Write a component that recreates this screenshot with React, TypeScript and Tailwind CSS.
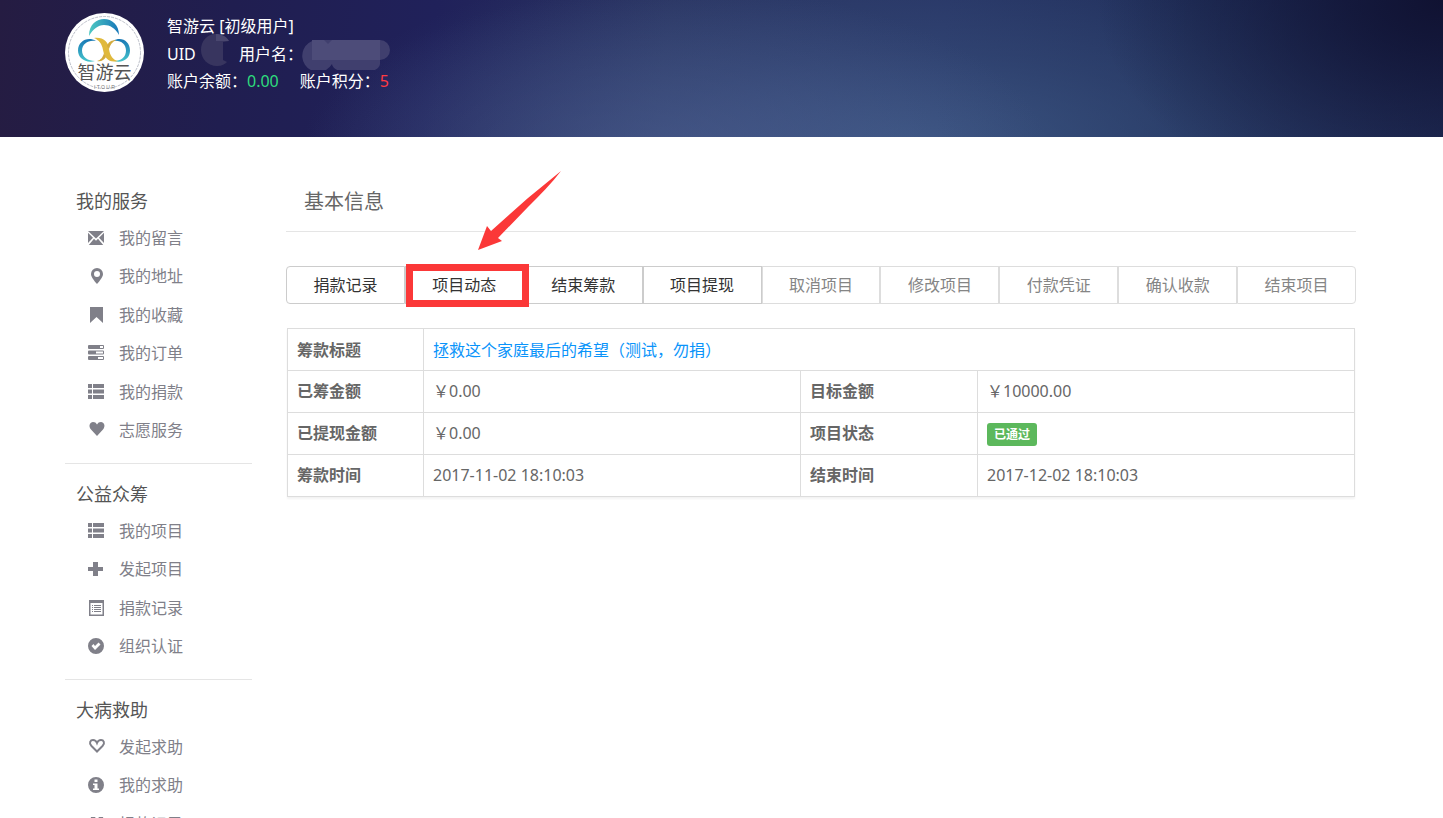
import React from 'react';

const iconPaths: Record<string, React.ReactNode> = {
  mail: (
    <>
      <path d="M0 1h16L8 8.600z" />
      <path d="M0 2.800v10.200L5 7.800zM16 2.800v10.200l-5-5.200zM0.800 15l5.200-6.200 2 1.900 2-1.900 5.200 6.200z" />
    </>
  ),
  pin: <path fillRule="evenodd" d="M9 0a6 6 0 0 1 6 6c0 3-3 6.500-6 10C6 12.500 3 9 3 6a6 6 0 0 1 6-6zm0 3a3 3 0 1 0 0 6 3 3 0 0 0 0-6z" />,
  bookmark: <path d="M2 0h13v16l-6.500-6L2 16z" />,
  tasks: (
    <path
      fillRule="evenodd"
      d="M1 0h14a1 1 0 0 1 1 1v2a1 1 0 0 1-1 1H1a1 1 0 0 1-1-1V1a1 1 0 0 1 1-1zm11 1v2h3V1zM1 5.500h14a1 1 0 0 1 1 1v2a1 1 0 0 1-1 1H1a1 1 0 0 1-1-1v-2a1 1 0 0 1 1-1zm7 1v2h7v-2zM1 11h14a1 1 0 0 1 1 1v2a1 1 0 0 1-1 1H1a1 1 0 0 1-1-1v-2a1 1 0 0 1 1-1zm9 1v2h5v-2z"
    />
  ),
  list: <path d="M0 0h4v4H0zM5 0h11v4H5zM0 5.500h4v4H0zM5 5.500h11v4H5zM0 11h4v4H0zM5 11h11v4H5z" />,
  heart: <path d="M9 14L3 7.500C0 4 2 0 5 0c2 0 3 .8 4 2.500C10 .8 11 0 13 0c3 0 5 4 2 7.500z" />,
  plus: <path d="M5 1h5v5h5v4h-5v5H5v-5H0V6h5z" />,
  record: (
    <path
      fillRule="evenodd"
      d="M1 0h15v16H1zm1.500 3v11.500h12V3zM4 5h1v1H4zM6 5h7v1H6zM4 7h1v1H4zM6 7h7v1H6zM4 9h1v1H4zM6 9h7v1H6zM4 11h1v1H4zM6 11h7v1H6z"
    />
  ),
  check: <path fillRule="evenodd" d="M8 0a8 8 0 1 1 0 16A8 8 0 0 1 8 0zM3.500 8L7 12l5.500-5.500L10.500 4.500 7 8 5.500 6z" />,
  heartOutline: (
    <path
      d="M9 12.500L3.500 7C0.500 3.800 2.500 1 5 1c2 0 3.200 1 4 3 .8-2 2-3 4-3 2.500 0 4.500 2.800 1.500 6z"
      fill="none"
      stroke="currentColor"
      strokeWidth="2"
    />
  ),
  info: <path fillRule="evenodd" d="M8 0a8 8 0 1 1 0 16A8 8 0 0 1 8 0zM6.500 2.500V5h3V2.500zM5 6.500V8h1.500v3.500H5V13h6v-1.500H9.500v-5z" />,
  gift: <path d="M3 1h4l2 3 2-3h4l1 4v11H2V5z" />,
};

const menu = [
  {
    title: '我的服务',
    items: [
      { icon: 'mail', label: '我的留言' },
      { icon: 'pin', label: '我的地址' },
      { icon: 'bookmark', label: '我的收藏' },
      { icon: 'tasks', label: '我的订单' },
      { icon: 'list', label: '我的捐款' },
      { icon: 'heart', label: '志愿服务' },
    ],
  },
  {
    title: '公益众筹',
    items: [
      { icon: 'list', label: '我的项目' },
      { icon: 'plus', label: '发起项目' },
      { icon: 'record', label: '捐款记录' },
      { icon: 'check', label: '组织认证' },
    ],
  },
  {
    title: '大病救助',
    items: [
      { icon: 'heartOutline', label: '发起求助' },
      { icon: 'info', label: '我的求助' },
      { icon: 'gift', label: '捐款记录' },
    ],
  },
];

const actions = [
  { label: '捐款记录', enabled: true },
  { label: '项目动态', enabled: true, marked: true },
  { label: '结束筹款', enabled: true },
  { label: '项目提现', enabled: true },
  { label: '取消项目', enabled: false },
  { label: '修改项目', enabled: false },
  { label: '付款凭证', enabled: false },
  { label: '确认收款', enabled: false },
  { label: '结束项目', enabled: false },
];

function MenuIcon({ name }: { name: string }) {
  return (
    <svg viewBox="0 0 16 16" className="size-4 shrink-0 overflow-visible" fill="currentColor" aria-hidden="true">
      {iconPaths[name]}
    </svg>
  );
}

function Logo() {
  return (
    <svg viewBox="0 0 79 79" className="size-[79px] shrink-0" role="img" aria-label="智游云">
      <defs>
        <linearGradient id="teal" x1="0" x2="1">
          <stop offset="0" stopColor="#4fc9c2" />
          <stop offset="1" stopColor="#1777b8" />
        </linearGradient>
        <linearGradient id="blue" x1="0" x2="0" y1="0" y2="1">
          <stop offset="0" stopColor="#1878b5" />
          <stop offset="1" stopColor="#45c3cb" />
        </linearGradient>
      </defs>
      <circle cx="39.5" cy="39.5" r="39.5" fill="#fff" />
      <circle cx="39.5" cy="39.5" r="36" fill="none" stroke="#a9adba" strokeWidth="0.8" strokeDasharray="3 1" />
      <path d="M24 23C24 11 32 6 39 6c8 0 15 6 15 16-4-7-9-10-15-10s-11 4-15 11z" fill="url(#teal)" />
      <path d="M31 28c-8-5-18 0-18 9.500 0 8 8 13 17 10.500-7 0-13-4-13-10.500 0-7 7-11 14-9.500z" fill="url(#blue)" />
      <path d="M48 28c8-5 17 0 17 9.500 0 8-7 13-16 10.500 7 0 12-4 12-10.500 0-7-6-11-13-9.500z" fill="url(#blue)" />
      <path d="M29 25c9-1 14 3 15 11 1 7 4 11 9 12-9 2-13-2-15-11-1-6-4-10-9-12z" fill="#e0b93c" />
      <path d="M51 27c-4 2-6 5-7 9l-2-3c1-4 5-6 9-6zM39 40l2 4c-2 3-5 5-9 4 4-1 6-4 7-8z" fill="#d3ab3d" />
      <text x="39.5" y="66" textAnchor="middle" fontSize="18" fill="#555" fontFamily="Noto Sans CJK SC, sans-serif">
        智游云
      </text>
      <text x="39.5" y="76" textAnchor="middle" fontSize="5" fill="#777" fontFamily="Liberation Sans, sans-serif">
        I T O U R
      </text>
    </svg>
  );
}

function Header() {
  return (
    <header className="h-[137px] bg-[radial-gradient(ellipse_24%_160%_at_100%_0%,#101232_0%,#10123200_100%),radial-gradient(ellipse_26%_130%_at_47%_120%,#5263978c_0%,#52639700_100%),radial-gradient(ellipse_42%_150%_at_63%_105%,#42608bc0_0%,#3d588370_45%,#2d427000_100%),linear-gradient(96deg,#251c42_0%,#201e50_16%,#20215a_30%,#28315f_46%,#253162_65%,#1e2c58_82%,#1e2a56_100%)] pt-[13px] pr-[87px] pl-[65px] text-white">
      <div className="flex gap-[23px]">
        <Logo />
        <div className="text-base leading-[27px]">
          <p className="h-[27px]">智游云 [初级用户]</p>
          <div className="flex h-7 items-center">
            <span className="w-[33px]">UID</span>
            <svg viewBox="0 0 30 32" className="-mt-2 mr-[9px] h-8 w-[30px]" aria-hidden="true">
              <path d="M16 0C7 0 1 7 1 16s7 16 16 16c5 0 8-2 10-4l-4-2V8l6-1c-3-5-8-7-13-7z" fill="#38355f" />
              <path d="M16 0v7h13c-3-5-8-7-13-7z" fill="#4a476f" />
            </svg>
            <span>用户名：</span>
            <svg viewBox="0 0 90 32" className="-ml-[3px] h-8 w-[90px]" aria-hidden="true">
              <path d="M16 2h64a10 10 0 0 1 10 10 10 10 0 0 1-10 10v4a20 8 0 0 1-48 0A16 16 0 1 1 16 2z" fill="#403f6e" />
              <path d="M12 2h12l4 4 4-4h48v20H12z" fill="#4d4c79" />
            </svg>
          </div>
          <p className="flex h-[27px] gap-[21px]">
            <span>
              账户余额：<span className="text-[#2edc7d]">0.00</span>
            </span>
            <span>
              账户积分：<span className="text-[#ff3a42]">5</span>
            </span>
          </p>
        </div>
      </div>
    </header>
  );
}

function Sidebar() {
  return (
    <nav className="w-[187px] shrink-0 divide-y divide-[#e5e5e5]">
      {menu.map((section) => (
        <section key={section.title} className="pt-3 pb-[13px]">
          <h2 className="pl-[11px] text-lg leading-9 text-[#555]">{section.title}</h2>
          <ul>
            {section.items.map((item) => (
              <li key={item.label} className="h-[38px] even:h-[39px]">
                <a href="#" className="flex h-[38px] items-center gap-[15px] pl-[23px] text-base text-[#808089]">
                  <MenuIcon name={item.icon} />
                  {item.label}
                </a>
              </li>
            ))}
          </ul>
        </section>
      ))}
    </nav>
  );
}

function ActionBar() {
  return (
    <div className="flex">
      {actions.map((action) => (
        <div key={action.label} className="group relative flex-1">
          <button
            type="button"
            disabled={!action.enabled}
            className="h-[38px] w-full border border-[#ccc] text-base text-[#333] group-first:rounded-l group-last:rounded-r disabled:border-[#ddd] disabled:text-[#858585]"
          >
            {action.label}
          </button>
          {action.marked && (
            <>
              <span className="pointer-events-none absolute -top-0.5 -right-[5px] -bottom-[3px] left-px z-10 border-[7px] border-[#fb3838]" />
              <svg viewBox="0 0 84 80" className="absolute bottom-full left-[73px] mb-4 h-20 w-[84px]" fill="#fb3838" aria-hidden="true">
                <path d="M83 1C74 13 62 25 50 37L20 68l4 3-24 9 9-24 4 5L50 28z" />
              </svg>
            </>
          )}
        </div>
      ))}
    </div>
  );
}

function InfoTable() {
  const label = 'border border-[#ddd] px-[9px] text-left font-bold';
  const value = 'border border-[#ddd] px-[9px]';

  return (
    <table className="w-full table-fixed border-collapse text-base text-[#666] shadow-[0_2px_2px_rgba(0,0,0,0.05)]">
      <colgroup>
        <col className="w-[136px]" />
        <col />
        <col className="w-[177px]" />
        <col />
      </colgroup>
      <tbody>
        <tr className="h-[42px]">
          <th scope="row" className={label}>筹款标题</th>
          <td colSpan={3} className={value}>
            <a href="#" className="text-[#0a94fa]">拯救这个家庭最后的希望（测试，勿捐）</a>
          </td>
        </tr>
        <tr className="h-[42px] *:pb-0.5">
          <th scope="row" className={label}>已筹金额</th>
          <td className={value}>￥0.00</td>
          <th scope="row" className={label}>目标金额</th>
          <td className={value}>￥10000.00</td>
        </tr>
        <tr className="h-[42px] *:pb-0.5">
          <th scope="row" className={label}>已提现金额</th>
          <td className={value}>￥0.00</td>
          <th scope="row" className={label}>项目状态</th>
          <td className={value}>
            <span className="mt-1 inline-block rounded-[3px] bg-[#5cb85c] px-[7px] align-middle text-xs leading-[23px] font-bold text-white">
              已通过
            </span>
          </td>
        </tr>
        <tr className="h-[42px] *:pb-0.5">
          <th scope="row" className={label}>筹款时间</th>
          <td className={value}>2017-11-02 18:10:03</td>
          <th scope="row" className={label}>结束时间</th>
          <td className={value}>2017-12-02 18:10:03</td>
        </tr>
      </tbody>
    </table>
  );
}

export default function App() {
  return (
    <div className="min-h-screen bg-white font-['Noto_Sans','Noto_Sans_CJK_SC',sans-serif]">
      <Header />
      <div className="flex gap-[34px] pt-[34px] pr-[87px] pl-[65px]">
        <Sidebar />
        <main className="min-w-0 flex-1">
          <h1 className="border-b border-[#e5e5e5] pt-4 pb-[14px] pl-[18px] text-xl leading-[30px] text-[#666]">基本信息</h1>
          <div className="pt-[34px]">
            <ActionBar />
          </div>
          <div className="px-px pt-6">
            <InfoTable />
          </div>
        </main>
      </div>
    </div>
  );
}
